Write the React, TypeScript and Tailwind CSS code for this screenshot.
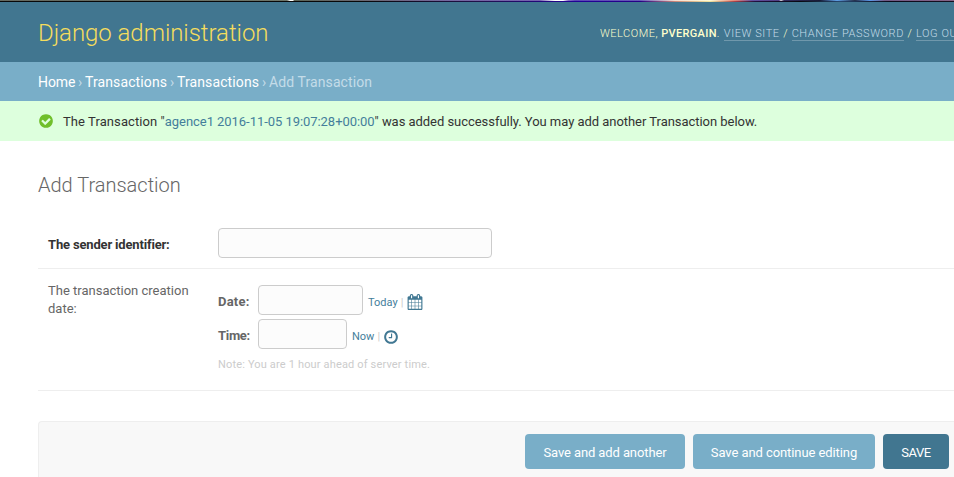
import React from "react";

const CHECK =
  "M1412 734q0-28-18-46l-91-90q-19-19-45-19t-45 19l-408 407-226-226q-19-19-45-19t-45 19l-91 90q-18 18-18 46 0 27 18 45l362 362q19 19 45 19 27 0 46-19l543-543q18-18 18-45zm252 162q0 209-103 385.5t-279.5 279.5-385.5 103-385.5-103-279.5-279.5-103-385.5 103-385.5 279.5-279.5 385.5-103 385.5 103 279.5 279.5 103 385.5z";
const CLOCK =
  "M1024 544v448q0 14-9 23t-23 9h-320q-14 0-23-9t-9-23v-64q0-14 9-23t23-9h224v-352q0-14 9-23t23-9h64q14 0 23 9t9 23zm416 352q0-148-73-273t-198-198-273-73-273 73-198 198-73 273 73 273 198 198 273 73 273-73 198-198 73-273zm224 0q0 209-103 385.5t-279.5 279.5-385.5 103-385.5-103-279.5-279.5-103-385.5 103-385.5 279.5-279.5 385.5-103 385.5 103 279.5 279.5 103 385.5z";
const CALENDAR =
  "M192 1664h288v-288h-288v288zm352 0h320v-288h-320v288zm-352-352h288v-320h-288v320zm352 0h320v-320h-320v320zm-352-384h288v-288h-288v288zm736 736h320v-288h-320v288zm-384-736h320v-288h-320v288zm768 736h288v-288h-288v288zm-384-352h320v-320h-320v320zm-352-864v-288q0-13-9.5-22.5t-22.5-9.5h-64q-13 0-22.5 9.5t-9.5 22.5v288q0 13 9.5 22.5t22.5 9.5h64q13 0 22.5-9.5t9.5-22.5zm736 864h288v-320h-288v320zm-384-384h320v-288h-320v288zm384 0h288v-288h-288v288zm32-480v-288q0-13-9.5-22.5t-22.5-9.5h-64q-13 0-22.5 9.5t-9.5 22.5v288q0 13 9.5 22.5t22.5 9.5h64q13 0 22.5-9.5t9.5-22.5zm384-64v1280q0 52-38 90t-90 38h-1408q-52 0-90-38t-38-90v-1280q0-52 38-90t90-38h128v-96q0-66 47-113t113-47h64q66 0 113 47t47 113v96h384v-96q0-66 47-113t113-47h64q66 0 113 47t47 113v96h128q52 0 90 38t38 90z";

function Icon({ d, className }: { d: string; className: string }) {
  return (
    <svg viewBox="0 0 1792 1792" className={`h-4 w-4 shrink-0 fill-current ${className}`}>
      <path d={d} />
    </svg>
  );
}

const headerLink = "h-[15px] border-b border-white/25 leading-[15px] text-[#c4dce8] tracking-[0.58px]";
const field = "h-[30px] rounded border border-[#ccc] bg-[#fcfcfc] outline-none";
const button = "h-[35px] shrink-0 rounded pt-0.5 text-[13px] text-white";

export default function App() {
  return (
    <div className="h-[477px] w-[954px] overflow-hidden bg-white font-['Roboto',sans-serif] text-[13px] text-[#333]">
      <div className="h-px bg-[linear-gradient(90deg,#64685f_0,#6d7468_287px,#fff_290px,#fff_293px,#5d6557_294px,#6c6878_380px,#7467a0_450px,#7561af_540px,#fff_555px,#fff_563px,#8e73c6_568px,#5b46b5_575px,#6659b6_640px,#f9ded1_675px,#fffbd5_710px,#e78475_735px,#6351a0_752px,#513d82_779px,#ddd_781px,#352d5e_784px,#171a35_820px,#5fa0e6_837px,#26304a_855px,#5c98e8_870px,#725b86_885px,#866386_954px)]" />
      <div className="h-px bg-[linear-gradient(90deg,#080808_0,#080808_360px,#20104b_480px,#210097_580px,#250084_640px,#c98779_675px,#efe5a2_710px,#a84047_735px,#211040_755px,#080810_800px,#26476f_840px,#0b0819_890px,#171020_954px)]" />
      <header className="flex h-[60px] items-center whitespace-nowrap bg-[#417690]">
        <h1 className="ml-[38px] w-[562px] shrink-0 pt-0.5 text-2xl font-light tracking-[-0.05px] text-[#f5dd5d]">
          Django administration
        </h1>
        <div className="flex h-4 shrink-0 items-start pt-[2px] text-[11px] leading-[15px] font-light uppercase tracking-[0.5px] text-[#ffc]">
          <span className="whitespace-pre">Welcome, </span>
          <strong className="font-medium tracking-[0.32px]">pvergain</strong>
          <span className="w-[7px] whitespace-pre">. </span>
          <span className={headerLink}>View site</span>
          <span className="w-3 text-center">/</span>
          <span className={headerLink}>Change password</span>
          <span className="w-3 text-center">/</span>
          <span className={headerLink}>Log out</span>
        </div>
      </header>
      <nav className="flex h-[39px] items-center whitespace-pre bg-[#79aec8] pl-[38px] pt-px text-sm text-[#c4dce8]">
        <span className="w-[37px] tracking-[-0.1px] text-white">Home</span>
        <span className="w-2.5 text-center">›</span>
        <span className="w-[82px] tracking-[0.11px] text-white">Transactions</span>
        <span className="w-2.5 text-center">›</span>
        <span className="w-[82px] tracking-[0.11px] text-white">Transactions</span>
        <span className="w-2.5 text-center">›</span>
        <span className="tracking-[0.1px]">Add Transaction</span>
      </nav>
      <div className="flex h-10 items-center bg-[#dfd] pl-[38px]">
        <Icon d={CHECK} className="text-[#70bf2b]" />
        <p className="ml-[9px] whitespace-nowrap pt-px">
          <span className="tracking-[0.08px]">The Transaction "</span>
          <span className="tracking-[-0.05px] text-[#447e9b]">agence1 2016-11-05 19:07:28+00:00</span>
          <span className="tracking-[-0.04px]">
            " was added successfully. You may add another Transaction below.
          </span>
        </p>
      </div>
      <main className="pl-[38px]">
        <h2 className="pt-8 text-xl leading-6 font-light text-[#666]">Add Transaction</h2>
        <div className="mt-[31px] flex h-[41px] border-b border-[#eee] pl-2.5">
          <label className="w-[170px] pt-2 leading-[18px] font-bold tracking-[-0.17px]">The sender identifier:</label>
          <input className={`w-[274px] ${field}`} />
        </div>
        <div className="flex h-[122px] border-b border-[#eee] pl-2.5 pt-4 text-[#666]">
          <label className="-mt-[3px] w-[170px] pr-4 leading-[18px]">The transaction creation date:</label>
          <div className="flex flex-col gap-1">
            <div className="flex h-[30px] items-center">
              <span className="w-10 pt-1 font-bold tracking-[0.2px]">Date:</span>
              <input className={`w-[105px] ${field}`} />
              <span className="ml-[5px] pt-1.5 text-[11px] text-[#447e9b]">Today</span>
              <span className="ml-[3px] pt-1.5 text-[11px] text-[#ccc]">|</span>
              <Icon d={CALENDAR} className="ml-1 mt-1 text-[#417893]" />
            </div>
            <div className="flex h-[30px] items-center">
              <span className="w-10 pt-1 font-bold tracking-[-0.3px]">Time:</span>
              <input className={`w-[89px] ${field}`} />
              <span className="ml-[5px] pt-1.5 text-[11px] text-[#447e9b]">Now</span>
              <span className="ml-[3px] pt-1.5 text-[11px] text-[#ccc]">|</span>
              <Icon d={CLOCK} className="ml-[3px] mt-1.5 text-[#417893]" />
            </div>
            <p className="mt-[3px] text-[11px] leading-[18px] tracking-[0.16px] text-[#ccc]">
              Note: You are 1 hour ahead of server time.
            </p>
          </div>
        </div>
        <div className="mt-[30px] flex h-[70px] gap-2 rounded-tl border-l border-t border-[#eee] bg-[#f8f8f8] pl-[486px] pt-3">
          <button className={`w-40 bg-[#79aec8] tracking-[-0.1px] ${button}`}>Save and add another</button>
          <button className={`w-[182px] bg-[#79aec8] tracking-[-0.08px] ${button}`}>Save and continue editing</button>
          <button className={`w-[66px] bg-[#417690] tracking-[-0.4px] ${button}`}>SAVE</button>
        </div>
      </main>
    </div>
  );
}
